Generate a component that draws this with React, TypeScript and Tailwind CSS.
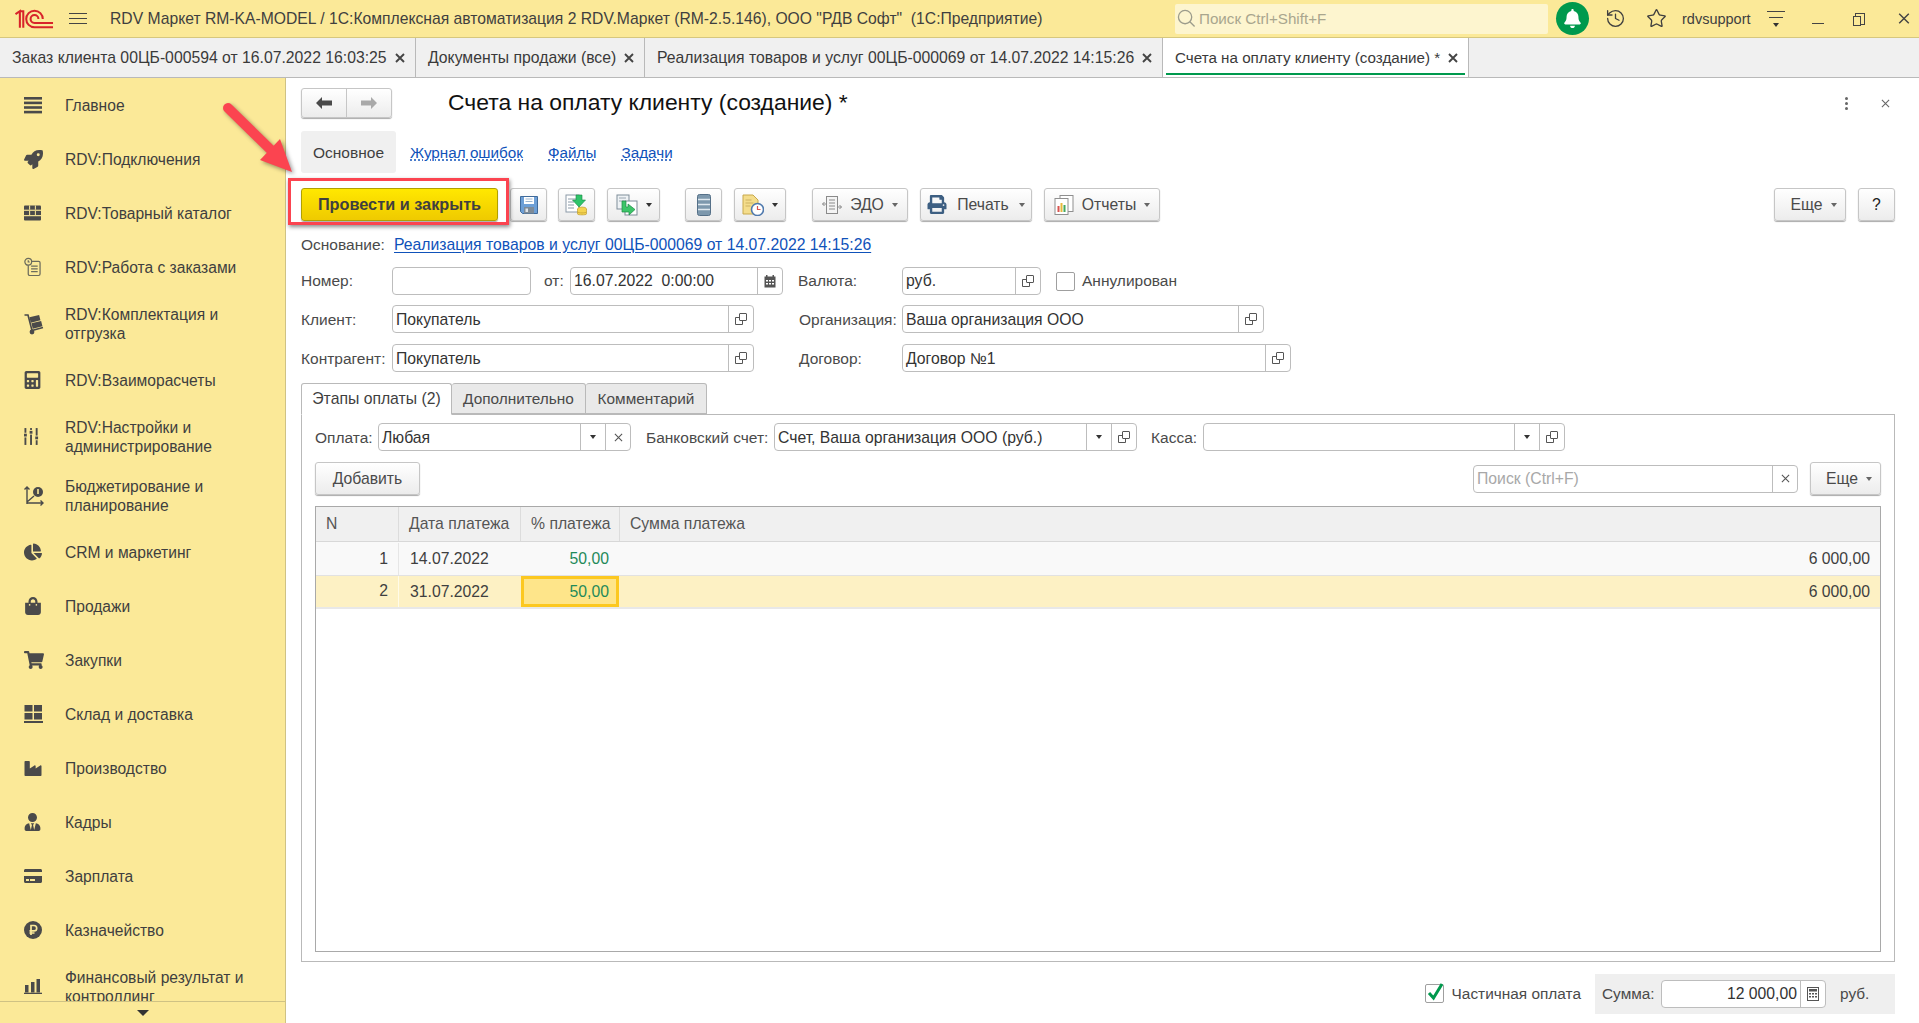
import { History, Star } from 'lucide-react';
import {
  FaBell,
  FaCalculator,
  FaChartPie,
  FaCreditCard,
  FaIndustry,
  FaPrint,
  FaRocket,
  FaShoppingBag,
  FaShoppingCart,
  FaUserTie,
} from 'react-icons/fa';
import type { ReactNode } from 'react';

const GridIcon = () => (
  <svg viewBox="0 0 18 16" className="w-[17px] h-[16px] fill-[#4a4a4a]">
    <rect x="0" y="0" width="18" height="16" rx="1" />
    <g className="fill-[#fbe998]">
      <rect x="0" y="4.5" width="18" height="1.2" />
      <rect x="0" y="10.2" width="18" height="1.2" />
      <rect x="5.4" y="0" width="1.1" height="4.5" />
      <rect x="11.5" y="0" width="1.1" height="4.5" />
      <rect x="5.4" y="5.7" width="1.1" height="4.5" />
      <rect x="11.5" y="5.7" width="1.1" height="4.5" />
    </g>
  </svg>
);

const OrdersIcon = () => (
  <svg viewBox="0 0 18 20" className="w-[17px] h-[20px] fill-none stroke-[#6b6b5c]" strokeWidth="1.3">
    <rect x="4.5" y="4" width="12.5" height="15" rx="1.5" />
    <circle cx="4.5" cy="4.5" r="3.6" className="fill-[#fbe998]" />
    <path d="M4.5 2.8v1.9h1.6M7.5 9h7M7.5 12h7M7.5 15h7" />
  </svg>
);

const TrolleyIcon = () => (
  <svg viewBox="0 0 20 22" className="w-[20px] h-[22px]">
    <path d="M0.5 2h3.5l4 15.5 11-3" fill="none" stroke="#4a4a4a" strokeWidth="1.6" />
    <circle cx="8" cy="19" r="2.4" fill="#4a4a4a" />
    <rect x="6" y="3" width="10" height="5.5" fill="#4a4a4a" transform="rotate(-14 11 6)" />
    <rect x="8" y="9" width="10" height="5.5" fill="#4a4a4a" transform="rotate(-14 13 12)" />
  </svg>
);

const SlidersIcon = () => (
  <svg viewBox="0 0 16 18" className="w-[15px] h-[17px] fill-[#4a4a4a]">
    <rect x="0.5" y="0" width="2" height="5" />
    <rect x="0" y="6" width="3" height="3" />
    <rect x="0.5" y="10" width="2" height="8" />
    <rect x="6.5" y="0" width="2" height="2" />
    <rect x="6" y="3" width="3" height="3" />
    <rect x="6.5" y="7" width="2" height="11" />
    <rect x="12.5" y="0" width="2" height="8" />
    <rect x="12" y="9" width="3" height="3" />
    <rect x="12.5" y="13" width="2" height="5" />
  </svg>
);

const BudgetIcon = () => (
  <svg viewBox="0 0 20 20" className="w-[20px] h-[20px]">
    <path d="M3 1v17M0.5 3.5 3 1l2.5 2.5M3 17h16M16.5 14.5 19 17l-2.5 2.5M3 16l7-6" fill="none" stroke="#4a4a4a" strokeWidth="1.4" />
    <circle cx="14" cy="6" r="5" fill="#4a4a4a" />
    <rect x="13.2" y="3" width="1.6" height="5" fill="#fbe998" />
  </svg>
);

const WarehouseIcon = () => (
  <svg viewBox="0 0 19 18" className="w-[19px] h-[18px] fill-[#4a4a4a]">
    <rect x="0.5" y="0" width="8" height="6.5" />
    <rect x="10" y="0" width="8" height="6.5" />
    <rect x="0.5" y="8" width="8" height="6.5" />
    <rect x="10" y="8" width="8" height="6.5" />
    <rect x="0" y="16" width="19" height="2" />
  </svg>
);

const RubleIcon = () => (
  <svg viewBox="0 0 18 18" className="w-[18px] h-[18px]">
    <circle cx="9" cy="9" r="9" fill="#4a4a4a" />
    <path d="M7 14V4.5h3a2.6 2.6 0 0 1 0 5.4H5.5M5.5 12h5" fill="none" stroke="#fbe998" strokeWidth="1.7" />
  </svg>
);

const BarsIcon = () => (
  <svg viewBox="0 0 18 15" className="w-[18px] h-[15px] fill-[#4a4a4a]">
    <rect x="1" y="6" width="3.5" height="7.5" />
    <rect x="7" y="3" width="3.5" height="10.5" />
    <rect x="12.5" y="0" width="3.5" height="13.5" />
    <rect x="0" y="13.7" width="18" height="1.3" />
  </svg>
);

const MenuIcon = () => (
  <svg viewBox="0 0 18 17" className="w-[18px] h-[17px] fill-[#4a4a4a]">
    <rect y="0" width="18" height="2.6" />
    <rect y="4.6" width="18" height="2.6" />
    <rect y="9.2" width="18" height="2.6" />
    <rect y="13.8" width="18" height="2.6" />
  </svg>
);

const sideItems: { icon: ReactNode; lines: string[] }[] = [
  { icon: <MenuIcon />, lines: ['Главное'] },
  { icon: <FaRocket className="w-[19px] h-[19px] text-[#4a4a4a]" />, lines: ['RDV:Подключения'] },
  { icon: <GridIcon />, lines: ['RDV:Товарный каталог'] },
  { icon: <OrdersIcon />, lines: ['RDV:Работа с заказами'] },
  { icon: <TrolleyIcon />, lines: ['RDV:Комплектация и', 'отгрузка'] },
  { icon: <FaCalculator className="w-[17px] h-[18px] text-[#4a4a4a]" />, lines: ['RDV:Взаиморасчеты'] },
  { icon: <SlidersIcon />, lines: ['RDV:Настройки и', 'администрирование'] },
  { icon: <BudgetIcon />, lines: ['Бюджетирование и', 'планирование'] },
  { icon: <FaChartPie className="w-[18px] h-[18px] text-[#4a4a4a]" />, lines: ['CRM и маркетинг'] },
  { icon: <FaShoppingBag className="w-[18px] h-[18px] text-[#4a4a4a]" />, lines: ['Продажи'] },
  { icon: <FaShoppingCart className="w-[20px] h-[18px] text-[#4a4a4a]" />, lines: ['Закупки'] },
  { icon: <WarehouseIcon />, lines: ['Склад и доставка'] },
  { icon: <FaIndustry className="w-[18px] h-[17px] text-[#4a4a4a]" />, lines: ['Производство'] },
  { icon: <FaUserTie className="w-[17px] h-[18px] text-[#4a4a4a]" />, lines: ['Кадры'] },
  { icon: <FaCreditCard className="w-[18px] h-[16px] text-[#4a4a4a]" />, lines: ['Зарплата'] },
  { icon: <RubleIcon />, lines: ['Казначейство'] },
  { icon: <BarsIcon />, lines: ['Финансовый результат и', 'контроллинг'] },
];

const Caret = ({ dark }: { dark?: boolean }) => (
  <span
    className={`inline-block w-0 h-0 border-l-[3px] border-r-[3px] border-t-[4px] border-l-transparent border-r-transparent ${
      dark ? 'border-t-[#333]' : 'border-t-[#666]'
    }`}
  />
);

const CloseX = ({ className, bold }: { className: string; bold?: boolean }) => (
  <svg viewBox="0 0 10 10" className={className}>
    <path d="M1 1l8 8M9 1l-8 8" fill="none" stroke="currentColor" strokeWidth={bold ? 1.9 : 1.2} />
  </svg>
);

const OpenIcon = () => (
  <svg viewBox="0 0 12 12" className="w-[12px] h-[12px] fill-none stroke-[#555]">
    <rect x="4.5" y="0.5" width="7" height="7" rx="0.5" />
    <path d="M4.5 4.5h-4v7h7v-4" />
  </svg>
);

const CalendarIcon = () => (
  <svg viewBox="0 0 12 13" className="w-[12px] h-[13px]">
    <rect x="0.5" y="1.5" width="11" height="11" fill="#555" />
    <rect x="2" y="0" width="1.5" height="3" fill="#555" />
    <rect x="8.5" y="0" width="1.5" height="3" fill="#555" />
    <g fill="#fff">
      <rect x="2" y="5" width="2" height="1.5" />
      <rect x="5" y="5" width="2" height="1.5" />
      <rect x="8" y="5" width="2" height="1.5" />
      <rect x="2" y="8" width="2" height="1.5" />
      <rect x="5" y="8" width="2" height="1.5" />
      <rect x="8" y="8" width="2" height="1.5" />
    </g>
  </svg>
);

const CalcIcon = () => (
  <svg viewBox="0 0 12 14" className="w-[12px] h-[14px]">
    <rect x="0.5" y="0.5" width="11" height="13" fill="#fff" stroke="#555" />
    <rect x="2" y="2" width="8" height="2.5" fill="#555" />
    <g fill="#555">
      <rect x="2" y="6" width="2" height="1.5" />
      <rect x="5" y="6" width="2" height="1.5" />
      <rect x="8" y="6" width="2" height="1.5" />
      <rect x="2" y="9" width="2" height="1.5" />
      <rect x="5" y="9" width="2" height="1.5" />
      <rect x="8" y="9" width="2" height="1.5" />
    </g>
  </svg>
);

type Addon = 'open' | 'drop' | 'clear' | 'cal' | 'calc';

const addonIcons: Record<Addon, ReactNode> = {
  open: <OpenIcon />,
  drop: <Caret dark />,
  clear: <CloseX className="w-[9px] h-[9px] text-[#555]" />,
  cal: <CalendarIcon />,
  calc: <CalcIcon />,
};

const Field = ({
  className,
  value,
  addons = [],
  placeholder,
  right,
  flat,
}: {
  className: string;
  value?: string;
  addons?: Addon[];
  placeholder?: string;
  right?: boolean;
  flat?: boolean;
}) => (
  <div className={`flex h-[28px] rounded-[4px] border border-[#bdbdbd] bg-white shrink-0 text-[15.75px] ${className}`}>
    <div
      className={`flex-1 min-w-0 px-[3px] flex items-center whitespace-pre ${flat ? '' : 'pt-[1px]'} ${right ? 'justify-end' : ''} ${
        placeholder ? 'text-[#a8a8a8]' : 'text-[#333]'
      }`}
    >
      {value ?? placeholder}
    </div>
    {addons.map((a) => (
      <div key={a} className="w-[25px] border-l border-[#bdbdbd] flex items-center justify-center">
        {addonIcons[a]}
      </div>
    ))}
  </div>
);

const Btn = ({ className, children }: { className: string; children: ReactNode }) => (
  <div
    className={`h-[33px] shrink-0 flex items-center justify-center rounded-[3px] border border-[#c6c6c6] bg-linear-to-b from-white to-[#ececec] shadow-[0_1px_1px_#aaaaaa] text-[#4a4a4a] ${className}`}
  >
    {children}
  </div>
);

const SaveIcon = () => (
  <svg viewBox="0 0 18 18" className="w-[18px] h-[18px]">
    <path d="M0.5 0.5h17v17h-15l-2-2z" fill="#6d9fd6" stroke="#3f6a9a" />
    <rect x="4" y="1" width="10" height="7" fill="#fff" />
    <path d="M5.5 3h7M5.5 5.5h7" stroke="#9db6d0" />
    <rect x="4" y="11" width="10" height="6.5" fill="#7e8b98" />
    <rect x="5.5" y="12.5" width="2.5" height="3.5" fill="#dfe5ea" />
  </svg>
);

const PostIcon = () => (
  <svg viewBox="0 0 24 22" className="w-[24px] h-[22px]">
    <rect x="1" y="1" width="13" height="17" fill="#fff" stroke="#8b9aa8" />
    <path d="M3 5h8M3 8h6M3 11h6M3 14h6" stroke="#8b9aa8" />
    <path d="M11 1h6l0 5h3.5l-6.5 7-6.5-7H11z" fill="#2fc46a" stroke="#178a45" strokeWidth="0.6" />
    <ellipse cx="17" cy="15" rx="4.5" ry="2" fill="#f4d34f" stroke="#b8952a" strokeWidth="0.6" />
    <path d="M12.5 15v5c0 1.2 9 1.2 9 0v-5" fill="#f4d34f" stroke="#b8952a" strokeWidth="0.6" />
    <path d="M12.5 18c1 1.2 8 1.2 9 0" fill="none" stroke="#b8952a" strokeWidth="0.6" />
  </svg>
);

const DocsArrowIcon = () => (
  <svg viewBox="0 0 22 22" className="w-[22px] h-[22px]">
    <rect x="1" y="1" width="12" height="14" fill="#eef2f5" stroke="#7f8d99" />
    <rect x="9" y="7" width="12" height="14" fill="#fff" stroke="#7f8d99" />
    <path d="M3 4h7M3 7h5" stroke="#9aa6b0" />
    <path d="M6 7h4v6h2v-3l7 5.5-6 5.5v-3H6z" fill="#3cc568" stroke="#1c8a45" strokeWidth="0.7" />
  </svg>
);

const StackIcon = () => (
  <svg viewBox="0 0 14 22" className="w-[14px] h-[22px]">
    <rect x="0.5" y="0.5" width="13" height="21" rx="2" fill="#7d98ad" stroke="#557088" />
    <path d="M1 5.5h12M1 10.5h12M1 15.5h12" stroke="#dfe8ef" strokeWidth="1.4" />
  </svg>
);

const ClockDocIcon = () => (
  <svg viewBox="0 0 22 22" className="w-[22px] h-[22px]">
    <path d="M1 1h10l5 5v14H1z" fill="#f4dd8c" stroke="#c8a94c" />
    <path d="M3.5 6h6M3.5 9h8M3.5 12h5" stroke="#cdb262" />
    <circle cx="15.5" cy="15.5" r="6" fill="#fff" stroke="#4f79ad" strokeWidth="1.6" />
    <path d="M15.5 12v3.5h3" fill="none" stroke="#d9534f" strokeWidth="1.2" />
  </svg>
);

const EdoIcon = () => (
  <svg viewBox="0 0 20 20" className="w-[20px] h-[20px] fill-none stroke-[#8a8a8a]">
    <rect x="4.5" y="1.5" width="11" height="17" fill="#f4f4f4" />
    <path d="M7 5h6M7 8h6M7 11h6M7 14h6" />
    <path d="M0.5 9h4M2.5 7l-2 2 2 2M15.5 12h4M17.5 10l2 2-2 2" />
  </svg>
);

const ReportIcon = () => (
  <svg viewBox="0 0 20 20" className="w-[20px] h-[20px]">
    <rect x="6" y="0.5" width="13" height="16" fill="#fff" stroke="#8f8f8f" />
    <rect x="1" y="3.5" width="13" height="16" fill="#fff" stroke="#8f8f8f" />
    <rect x="3.5" y="11" width="2" height="6" fill="#d9534f" />
    <rect x="6.5" y="8" width="2" height="9" fill="#e8b93c" />
    <rect x="9.5" y="10" width="2" height="7" fill="#43a85f" />
  </svg>
);

const Logo1C = () => (
  <svg viewBox="0 0 40 20" className="w-[39px] h-[20px] fill-none stroke-[#d8232a]" strokeWidth="2.1">
    <path d="M0.5 5 L5 2 V19 M5 2 H8.5 V19" />
    <path d="M39 18.5 H20 A8.5 8.5 0 0 1 20 1.5 A8.5 8.5 0 0 1 28.5 10" />
    <path d="M39 14 H20 A4 4 0 0 1 20 6 A4 4 0 0 1 24 10" />
  </svg>
);

const DocTab = ({ width, title, active }: { width: string; title: string; active?: boolean }) => (
  <div
    className={`relative h-full shrink-0 flex items-center justify-between pl-[12px] pr-[10px] border-r border-[#b9b9b9] ${width} ${
      active ? 'bg-white text-[15.2px]' : ''
    }`}
  >
    <span className="text-[#3a3a3a] whitespace-nowrap">{title}</span>
    <CloseX className="w-[10px] h-[10px] text-[#444] shrink-0" bold />
    {active && <div className="absolute left-[3px] right-[3px] bottom-[2px] h-[2px] bg-[#00994d]" />}
  </div>
);

const NavLink = ({ children }: { children: ReactNode }) => (
  <span className="text-[15.25px] text-[#0f52ba] underline decoration-dotted underline-offset-2">{children}</span>
);

export default function App() {
  return (
    <div className="relative w-screen h-screen overflow-hidden flex flex-col bg-white text-[15.75px] leading-[18px] text-[#4a4a4a] font-['Liberation_Sans',Arial,sans-serif]">
      {/* Top bar */}
      <header className="h-[38px] shrink-0 flex items-center bg-[#fbe998] border-b border-[#d6c77e]">
        <div className="ml-[15px] w-[39px]">
          <Logo1C />
        </div>
        <div className="ml-[15px] w-[18px] flex flex-col gap-[4px]">
          <div className="h-[1px] bg-[#444]" />
          <div className="h-[1px] bg-[#444]" />
          <div className="h-[1px] bg-[#444]" />
        </div>
        <div className="ml-[23px] w-[1065px] whitespace-pre text-[15.7px] text-[#3f3f3f]">
          RDV Маркет RM-KA-MODEL / 1С:Комплексная автоматизация 2 RDV.Маркет (RM-2.5.146), ООО "РДВ Софт"  (1С:Предприятие)
        </div>
        <div className="h-[30px] w-[373px] rounded-[2px] bg-[#fdf5cf] flex items-center pl-[2px] text-[#a9a68e] text-[15.2px]">
          <svg viewBox="0 0 20 20" className="w-[19px] h-[19px] fill-none stroke-[#9c9c8c] mr-[3px]" strokeWidth="1.4">
            <circle cx="8.5" cy="8.5" r="7" />
            <path d="M13.5 13.5l5 5" />
          </svg>
          Поиск Ctrl+Shift+F
        </div>
        <div className="ml-[8px] w-[33px] h-[33px] rounded-full bg-[#00994d] flex items-center justify-center">
          <FaBell className="w-[19px] h-[19px] text-white" />
        </div>
        <History className="ml-[16px] w-[21px] h-[21px] text-[#3f3f3f]" strokeWidth={1.5} />
        <Star className="ml-[20px] w-[21px] h-[21px] text-[#3f3f3f]" strokeWidth={1.5} />
        <span className="ml-[15px] text-[14.5px] text-[#3f3f3f]">rdvsupport</span>
        <div className="ml-[16px] w-[18px] flex flex-col items-center gap-[5px]">
          <div className="h-[1px] w-full bg-[#444]" />
          <div className="h-[1px] w-[14px] bg-[#444]" />
          <Caret dark />
        </div>
        <div className="ml-[27px] w-[12px] h-[1px] bg-[#444] mt-[10px]" />
        <div className="relative ml-[31px] w-[10px] h-[12px] border border-[#444] after:absolute after:left-[-3px] after:top-[2px] after:w-[8px] after:h-[10px] after:border after:border-[#444] after:bg-[#fbe998]" />
        <CloseX className="ml-[33px] w-[12px] h-[13px] text-[#444]" />
      </header>

      {/* Open documents */}
      <div className="h-[40px] shrink-0 flex bg-[#f0f0f0] border-b border-[#b9b9b9]">
        <DocTab width="w-[416px]" title="Заказ клиента 00ЦБ-000594 от 16.07.2022 16:03:25" />
        <DocTab width="w-[229px]" title="Документы продажи (все)" />
        <DocTab width="w-[518px]" title="Реализация товаров и услуг 00ЦБ-000069 от 14.07.2022 14:15:26" />
        <DocTab width="w-[306px]" title="Счета на оплату клиенту (создание) *" active />
      </div>

      <div className="flex-1 min-h-0 flex">
        {/* Sections */}
        <aside className="w-[286px] shrink-0 flex flex-col bg-[#fbe998] border-r border-[#cfc284] text-[#3f3f3f] text-[15.6px]">
          <div className="flex-1 min-h-0 overflow-hidden">
            {sideItems.map((item) => (
              <div
                key={item.lines[0]}
                className={`flex items-center ${item.lines.length > 1 ? 'h-[59px]' : 'h-[54px]'}`}
              >
                <div className="w-[65px] pl-[24px] shrink-0 flex items-center">{item.icon}</div>
                <div className="pt-[2px] leading-[18.5px] whitespace-nowrap">
                  {item.lines.map((l) => (
                    <div key={l}>{l}</div>
                  ))}
                </div>
              </div>
            ))}
          </div>
          <div className="h-[22px] shrink-0 border-t border-[#cfc284] flex items-center justify-center bg-[#fbe998]">
            <span className="w-0 h-0 border-l-[6px] border-r-[6px] border-t-[6px] border-l-transparent border-r-transparent border-t-[#333]" />
          </div>
        </aside>

        {/* Form */}
        <main className="flex-1 min-w-0 flex flex-col pl-[15px] pr-[24px]">
          <div className="mt-[10px] h-[30px] flex items-center relative shrink-0">
            <div className="w-[91px] h-[30px] flex rounded-[3px] border border-[#c6c6c6] bg-linear-to-b from-white to-[#ececec] shadow-[0_1px_1px_#aaaaaa]">
              <div className="w-[45px] border-r border-[#c6c6c6] flex items-center justify-center">
                <svg viewBox="0 0 16 12" className="w-[16px] h-[12px] fill-[#4a4a4a]">
                  <path d="M0 6l6-6v3.5h10v5H6V12z" />
                </svg>
              </div>
              <div className="flex-1 flex items-center justify-center">
                <svg viewBox="0 0 16 12" className="w-[16px] h-[12px] fill-[#a9a9a9]">
                  <path d="M16 6l-6-6v3.5H0v5h10V12z" />
                </svg>
              </div>
            </div>
            <h1 className="ml-[56px] pb-[2px] text-[22.9px] text-[#111] font-normal">Счета на оплату клиенту (создание) *</h1>
            <div className="ml-auto flex items-center mr-[5px]">
              <div className="flex flex-col gap-[2px]">
                <div className="w-[3px] h-[3px] rounded-full bg-[#666]" />
                <div className="w-[3px] h-[3px] rounded-full bg-[#666]" />
                <div className="w-[3px] h-[3px] rounded-full bg-[#666]" />
              </div>
              <CloseX className="ml-[33px] w-[9px] h-[9px] text-[#666]" />
            </div>
          </div>

          <div className="mt-[13px] h-[42px] shrink-0 flex items-center">
            <div className="w-[95px] h-full pt-[2px] rounded-[3px] bg-[#f0f0f0] flex items-center justify-center text-[#3f3f3f] text-[15.5px]">Основное</div>
            <div className="ml-[14px] pt-[2px]"><NavLink>Журнал ошибок</NavLink></div>
            <div className="ml-[25px] pt-[2px]"><NavLink>Файлы</NavLink></div>
            <div className="ml-[25px] pt-[2px]"><NavLink>Задачи</NavLink></div>
          </div>

          <div className="mt-[15px] h-[33px] shrink-0 flex">
            <div className="w-[197px] h-[33px] pb-[2px] rounded-[3px] border border-[#b0a000] bg-linear-to-b from-[#ffe800] to-[#efca00] shadow-[0_1px_1px_#aaaaaa] flex items-center justify-center font-bold text-[16.3px] text-[#3f3f3f]">
              Провести и закрыть
            </div>
            <Btn className="ml-[12px] w-[37px]"><SaveIcon /></Btn>
            <Btn className="ml-[11px] w-[37px]"><PostIcon /></Btn>
            <Btn className="ml-[12px] w-[53px] gap-[8px]"><DocsArrowIcon /><Caret dark /></Btn>
            <Btn className="ml-[25px] w-[37px]"><StackIcon /></Btn>
            <Btn className="ml-[12px] w-[52px] gap-[8px]"><ClockDocIcon /><Caret dark /></Btn>
            <Btn className="ml-[26px] w-[96px] gap-[8px]"><EdoIcon />ЭДО<Caret /></Btn>
            <Btn className="ml-[12px] w-[112px] gap-[10px]"><FaPrint className="w-[20px] h-[19px] text-[#3d5f82]" />Печать<Caret /></Btn>
            <Btn className="ml-[12px] w-[116px] gap-[8px]"><ReportIcon />Отчеты<Caret /></Btn>
            <Btn className="ml-auto w-[72px] pl-[7px] gap-[8px]">Еще<Caret /></Btn>
            <Btn className="ml-[12px] w-[37px] text-[#222]">?</Btn>
          </div>

          <div className="mt-[14px] h-[20px] shrink-0 flex items-center">
            <span className="w-[93px] text-[15.5px]">Основание:</span>
            <span className="text-[#0f52ba] underline underline-offset-2">Реализация товаров и услуг 00ЦБ-000069 от 14.07.2022 14:15:26</span>
          </div>

          <div className="mt-[12px] flex items-center shrink-0 text-[15.5px]">
            <span className="w-[91px]">Номер:</span>
            <Field className="w-[139px]" flat />
            <span className="ml-[13px] w-[26px]">от:</span>
            <Field className="w-[213px] border-[#8f8f8f]" value="16.07.2022  0:00:00" addons={['cal']} flat />
            <span className="ml-[15px] w-[104px]">Валюта:</span>
            <Field className="w-[139px]" value="руб." addons={['open']} flat />
            <div className="ml-[15px] w-[19px] h-[19px] rounded-[2px] border border-[#9f9f9f] bg-white" />
            <span className="ml-[7px]">Аннулирован</span>
          </div>

          <div className="mt-[10px] flex items-center shrink-0 text-[15.5px] [&>span]:pt-[2px]">
            <span className="w-[91px]">Клиент:</span>
            <Field className="w-[362px]" value="Покупатель" addons={['open']} />
            <span className="ml-[45px] w-[103px]">Организация:</span>
            <Field className="w-[362px]" value="Ваша организация ООО" addons={['open']} />
          </div>

          <div className="mt-[11px] flex items-center shrink-0 text-[15.5px] [&>span]:pt-[2px]">
            <span className="w-[91px]">Контрагент:</span>
            <Field className="w-[362px]" value="Покупатель" addons={['open']} />
            <span className="ml-[45px] w-[103px]">Договор:</span>
            <Field className="w-[389px]" value="Договор №1" addons={['open']} />
          </div>

          <div className="mt-[11px] h-[31px] shrink-0 flex relative z-10 text-[15.4px]">
            <div className="w-[151px] h-[32px] rounded-t-[3px] border border-[#b9b9b9] border-b-white bg-white flex items-center justify-center text-[#3f3f3f] text-[15.75px]">Этапы оплаты (2)</div>
            <div className="w-[134px] h-[31px] rounded-t-[3px] border border-l-0 border-[#b9b9b9] bg-[#e9e9e9] flex items-center justify-center">Дополнительно</div>
            <div className="w-[121px] h-[31px] rounded-t-[3px] border border-l-0 border-[#b9b9b9] bg-[#e9e9e9] flex items-center justify-center">Комментарий</div>
          </div>

          <section className="flex-1 min-h-0 flex flex-col border border-[#b9b9b9] pl-[13px] pr-[13px] pt-[8px] pb-[9px]">
            <div className="flex items-center shrink-0 text-[15.5px] [&>span]:pt-[2px]">
              <span className="w-[63px]">Оплата:</span>
              <Field className="w-[253px]" value="Любая" addons={['drop', 'clear']} />
              <span className="ml-[15px] w-[128px]">Банковский счет:</span>
              <Field className="w-[363px]" value="Счет, Ваша организация ООО (руб.)" addons={['drop', 'open']} />
              <span className="ml-[14px] w-[52px]">Касса:</span>
              <Field className="w-[362px]" addons={['drop', 'open']} />
            </div>

            <div className="mt-[11px] flex items-center shrink-0">
              <Btn className="w-[105px]">Добавить</Btn>
              <Field className="ml-auto w-[325px]" placeholder="Поиск (Ctrl+F)" addons={['clear']} />
              <Btn className="ml-[12px] w-[71px] pl-[7px] gap-[8px]">Еще<Caret /></Btn>
            </div>

            <div className="mt-[11px] flex-1 min-h-0 border border-[#a9a9a9] text-[#3f3f3f]">
              <div className="h-[35px] flex bg-[#f0f0f0] border-b border-[#d8d8d8] text-[#555]">
                <div className="w-[83px] pl-[10px] flex items-center border-r border-[#dcdcdc]">N</div>
                <div className="w-[122px] pl-[10px] flex items-center border-r border-[#dcdcdc]">Дата платежа</div>
                <div className="w-[99px] pl-[10px] flex items-center border-r border-[#dcdcdc]">% платежа</div>
                <div className="flex-1 pl-[10px] flex items-center">Сумма платежа</div>
              </div>
              <div className="h-[34px] pt-[1px] flex items-center bg-[#f9f9f9] border-b border-[#e2e2e2]">
                <div className="w-[83px] pr-[10px] text-right h-full leading-[32px] border-r border-[#e6e6e6]">1</div>
                <div className="w-[122px] pl-[11px]">14.07.2022</div>
                <div className="w-[99px] pr-[11px] text-right text-[#1f8a5a]">50,00</div>
                <div className="flex-1 pr-[10px] text-right">6 000,00</div>
              </div>
              <div className="h-[33px] flex items-center bg-[#fdf1c4] border-b-2 border-[#e8e8e8]">
                <div className="w-[83px] pr-[10px] text-right h-full leading-[30px] border-r border-[#fffbe8]">2</div>
                <div className="w-[122px] pl-[11px]">31.07.2022</div>
                <div className="w-[98px] mr-[1px] h-full pr-[7px] flex items-center justify-end text-[#1f8a5a] bg-[#fee58a] border-[3px] border-[#fcc820]">50,00</div>
                <div className="flex-1 pr-[10px] text-right">6 000,00</div>
              </div>
            </div>
          </section>

          <div className="h-[61px] shrink-0 pt-[2px] flex items-center justify-end">
            <div className="w-[19px] h-[19px] rounded-[2px] border border-[#9f9f9f] bg-white relative">
              <svg viewBox="0 0 18 18" className="absolute left-[1px] top-[-3px] w-[18px] h-[20px] fill-none stroke-[#00994d]" strokeWidth="3">
                <path d="M2 10l4.5 5L15 1" />
              </svg>
            </div>
            <span className="ml-[8px] text-[15.4px]">Частичная оплата</span>
            <div className="ml-[14px] w-[300px] h-[40px] bg-[#efefef] flex items-center">
              <span className="ml-[7px] w-[59px] text-[15.4px]">Сумма:</span>
              <Field className="w-[165px]" value="12 000,00" addons={['calc']} right />
              <span className="ml-[14px] text-[15.4px]">руб.</span>
            </div>
          </div>
        </main>
      </div>

      {/* Annotation drawn over the screenshot */}
      <div className="absolute left-[288px] top-[178px] w-[221px] h-[47px] border-[3px] border-[#fb4450] shadow-[1px_2px_4px_rgba(0,0,0,0.45)] pointer-events-none" />
      <svg viewBox="0 0 85 90" className="absolute left-[215px] top-[95px] w-[85px] h-[90px] pointer-events-none drop-shadow-[2px_2px_2px_rgba(0,0,0,0.4)]">
        <path d="M13 13 L58 57" stroke="#fb4450" strokeWidth="10" strokeLinecap="round" />
        <path d="M45 65 L65 44 L77 77 Z" fill="#fb4450" />
      </svg>
    </div>
  );
}
